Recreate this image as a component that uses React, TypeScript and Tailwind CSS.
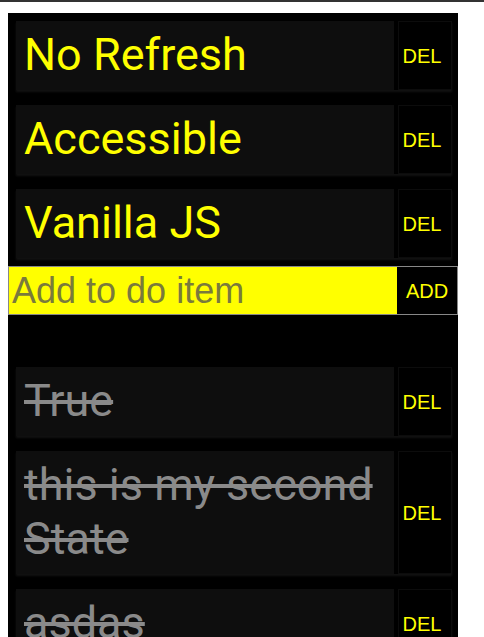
import React, { useState } from "react";

type Todo = { id: number; text: string; done: boolean };

const initial: Todo[] = [
  { id: 1, text: "No Refresh", done: false },
  { id: 2, text: "Accessible", done: false },
  { id: 3, text: "Vanilla JS", done: false },
  { id: 4, text: "True", done: true },
  { id: 5, text: "this is my second State", done: true },
  { id: 6, text: "asdas", done: true },
];

function TodoRow({ todo, onDelete }: { todo: Todo; onDelete: () => void }) {
  return (
    <li className="flex gap-[4px] shadow-[0_2px_2px_#121212]">
      <span
        className={`flex-1 bg-[#0e0e0e] px-[8px] pt-[7px] pb-[8px] text-[45px] font-['Roboto',sans-serif] leading-[54px] ${
          todo.done ? "text-[#8a8a8a] line-through" : "text-[#ffff00]"
        }`}
      >
        {todo.text}
      </span>
      <button
        onClick={onDelete}
        className="w-[54px] shrink-0 border border-[#0c0c0c] bg-black pr-[6px] text-[20px] text-[#ffff00] font-['Liberation_Sans',Arial,sans-serif]"
      >
        DEL
      </button>
    </li>
  );
}

export default function App() {
  const [todos, setTodos] = useState(initial);
  const [value, setValue] = useState("");

  const remove = (id: number) => setTodos(todos.filter((t) => t.id !== id));
  const add = (e: React.FormEvent) => {
    e.preventDefault();
    if (!value.trim()) return;
    setTodos([...todos, { id: Date.now(), text: value, done: false }]);
    setValue("");
  };

  const open = todos.filter((t) => !t.done);
  const done = todos.filter((t) => t.done);

  return (
    <div className="min-h-screen bg-white border-t-2 border-[#333]">
      <div className="ml-[8px] mt-[11px] w-[450px] bg-black pb-[8px]">
        <ul className="flex flex-col gap-[15px] px-[8px] pt-[8px] pb-[8px] pr-[6px]">
          {open.map((t) => (
            <TodoRow key={t.id} todo={t} onDelete={() => remove(t.id)} />
          ))}
        </ul>

        {/* Add form */}
        <form onSubmit={add} className="flex h-[49px] border border-[#888]">
          <input
            value={value}
            onChange={(e) => setValue(e.target.value)}
            placeholder="Add to do item"
            className="w-[388px] bg-[#ffff00] pl-[3px] text-[36px] text-black outline-none font-['Liberation_Sans',Arial,sans-serif] placeholder:text-[#7a7a3c]"
          />
          <button
            type="submit"
            className="flex-1 bg-black text-[20px] text-[#ffff00] font-['Liberation_Sans',Arial,sans-serif]"
          >
            ADD
          </button>
        </form>

        <ul className="flex flex-col gap-[15px] px-[8px] pt-[52px] pr-[6px]">
          {done.map((t) => (
            <TodoRow key={t.id} todo={t} onDelete={() => remove(t.id)} />
          ))}
        </ul>
      </div>
    </div>
  );
}
